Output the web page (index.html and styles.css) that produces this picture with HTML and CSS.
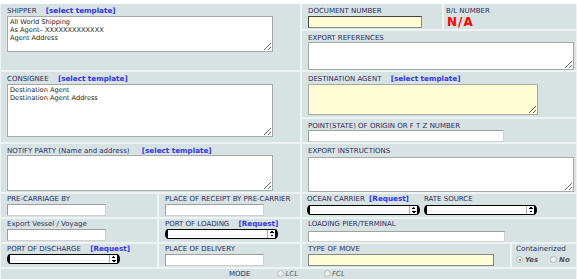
FILE: index.html
```html
<!DOCTYPE html>
<html lang="en">
<head>
    <meta charset="UTF-8">
    <title>Export Declaration</title>
    <link rel="stylesheet" href="styles.css">
</head>
<body>
    <div class="sheet">
        <!-- shipper / document -->
        <div class="band band-a">
            <div class="cell main">
                <div class="label">SHIPPER <a class="tpl">[select template]</a></div>
                <textarea class="box box-shipper">All World Shipping
As Agent– XXXXXXXXXXXXX
Agent Address</textarea>
            </div>
            <div class="side">
                <div class="pair pair-doc">
                    <div class="cell doc">
                        <div class="label">DOCUMENT NUMBER</div>
                        <input type="text" class="field yellow doc-field">
                    </div>
                    <div class="cell bl">
                        <div class="label">B/L NUMBER</div>
                        <div class="na">N/A</div>
                    </div>
                </div>
                <div class="cell grow">
                    <div class="label">EXPORT REFERENCES</div>
                    <textarea class="box box-ref"></textarea>
                </div>
            </div>
        </div>

        <!-- consignee / destination agent -->
        <div class="band band-b">
            <div class="cell main">
                <div class="label">CONSIGNEE <a class="tpl">[select template]</a></div>
                <textarea class="box box-consignee">Destination Agent
Destination Agent Address</textarea>
            </div>
            <div class="side">
                <div class="cell dest">
                    <div class="label">DESTINATION AGENT <a class="tpl">[select template]</a></div>
                    <textarea class="box yellow box-dest"></textarea>
                </div>
                <div class="cell grow">
                    <div class="label">POINT(STATE) OF ORIGIN OR F T Z NUMBER</div>
                    <input type="text" class="field point-field">
                </div>
            </div>
        </div>

        <!-- notify / instructions -->
        <div class="band band-c">
            <div class="cell main">
                <div class="label">NOTIFY PARTY (Name and address) <a class="tpl tpl-wide">[select template]</a></div>
                <textarea class="box box-notify"></textarea>
            </div>
            <div class="cell side">
                <div class="label">EXPORT INSTRUCTIONS</div>
                <textarea class="box box-instr"></textarea>
            </div>
        </div>

        <!-- transport rows -->
        <div class="band row">
            <div class="pair main">
                <div class="cell half">
                    <div class="label">PRE-CARRIAGE BY</div>
                    <input type="text" class="field short">
                </div>
                <div class="cell rest">
                    <div class="label">PLACE OF RECEIPT BY PRE-CARRIER</div>
                    <input type="text" class="field short">
                </div>
            </div>
            <div class="cell side carrier">
                <div class="pick-col">
                    <div class="label">OCEAN CARRIER <a class="tpl tpl-tight">[Request]</a></div>
                    <span class="pick"><span class="pick-arrows"></span></span>
                </div>
                <div class="pick-col">
                    <div class="label">RATE SOURCE</div>
                    <span class="pick"><span class="pick-arrows"></span></span>
                </div>
            </div>
        </div>

        <div class="band row">
            <div class="pair main">
                <div class="cell half">
                    <div class="label">Export Vessel / Voyage</div>
                    <input type="text" class="field short">
                </div>
                <div class="cell rest">
                    <div class="label">PORT OF LOADING <a class="tpl">[Request]</a></div>
                    <span class="pick pick-low"><span class="pick-arrows"></span></span>
                </div>
            </div>
            <div class="cell side">
                <div class="label">LOADING PIER/TERMINAL</div>
                <input type="text" class="field pier-field">
            </div>
        </div>

        <div class="band row row-f">
            <div class="pair main">
                <div class="cell half">
                    <div class="label">PORT OF DISCHARGE <a class="tpl">[Request]</a></div>
                    <span class="pick pick-low"><span class="pick-arrows"></span></span>
                </div>
                <div class="cell rest">
                    <div class="label">PLACE OF DELIVERY</div>
                    <input type="text" class="field short">
                </div>
            </div>
            <div class="pair side">
                <div class="cell move">
                    <div class="label">TYPE OF MOVE</div>
                    <input type="text" class="field yellow move-field">
                </div>
                <div class="cell boxed">
                    <div class="label label-plain">Containerized</div>
                    <div class="choices">
                        <span class="radio on"></span><i>Yes</i>
                        <span class="radio"></span><i>No</i>
                    </div>
                </div>
            </div>
        </div>

        <div class="cell mode">
            <span class="label">MODE</span>
            <span class="radio"></span><i>LCL</i>
            <span class="radio"></span><i>FCL</i>
        </div>
    </div>
</body>
</html>
```

FILE: styles.css
```css
:root {
    --cell-bg: #d7e3e3;
    --line-color: #eef4f4;
    --label-color: #2c2c62;
    --link-color: #3535f0;
    --yellow: #fffdd6;
}

body {
    margin: 0;
    background: #fff;
    font-family: 'DejaVu Sans', Verdana, sans-serif;
    color: var(--label-color);
}

.sheet {
    display: flex;
    flex-direction: column;
    gap: 2px;
    margin-top: 4px;
    padding: 0 1px;
    background: var(--line-color);
    height: 275px;
    overflow: hidden;
}

.band {
    display: flex;
    gap: 2px;
}

.band-a { height: 66px; }
.band-b { height: 71px; }
.band-c { height: 48px; }
.row { height: 23px; }
.row-f { height: 24px; }

.main {
    width: 299px;
    flex: none;
}

.side {
    width: 274px;
    flex: none;
    display: flex;
    flex-direction: column;
    gap: 2px;
}

.pair {
    display: flex;
    gap: 2px;
}

.side.pair {
    flex-direction: row;
}

.cell {
    background: var(--cell-bg);
    padding: 3px 6px 0;
    box-sizing: border-box;
}

.row .cell {
    padding-top: 1px;
}

.grow {
    flex: 1;
}

.pair-doc {
    height: 25px;
}

.doc { width: 140px; }
.bl { flex: 1; padding-left: 2px; }
.dest { height: 45px; }
.half { width: 156px; }
.rest { flex: 1; }
.move { width: 208px; }
.boxed { flex: 1; padding-left: 4px; }

.label {
    font-size: 7px;
    line-height: 8px;
    height: 8px;
    white-space: nowrap;
    margin-bottom: 1px;
}

.label-plain {
    font-size: 7.2px;
}

.tpl {
    font-size: 7.2px;
    font-weight: bold;
    color: var(--link-color);
    margin-left: 7px;
    cursor: pointer;
}

.tpl-wide { margin-left: 10px; }
.tpl-tight { margin-left: 2px; }

.na {
    color: #f00;
    font-weight: bold;
    font-size: 12px;
    line-height: 12px;
    letter-spacing: 1px;
    padding-left: 1px;
}

.box {
    display: block;
    box-sizing: border-box;
    border: 1px solid #a8a8a8;
    background: #fff;
    font-family: 'DejaVu Sans', Verdana, sans-serif;
    font-size: 6.6px;
    line-height: 8px;
    color: #1a1a1a;
    padding: 1px 2px;
    margin: 0;
    width: 266px;
    resize: both;
}

.box-shipper { height: 36px; margin-top: 1px; }
.box-ref { height: 28px; margin-top: -1px; }
.box-consignee { height: 53px; }
.box-dest { width: 230px; height: 31px; }
.box-notify { height: 36px; margin-top: -1px; }
.box-instr { height: 36px; margin-top: -1px; }

.yellow {
    background: var(--yellow);
}

.field {
    display: block;
    box-sizing: border-box;
    height: 12px;
    margin: 0;
    padding: 0 2px;
    border: 1px solid;
    border-color: #a0a0a0 #d0d0d0 #d0d0d0 #a0a0a0;
    background-color: #fff;
    font-size: 7px;
}

.field.yellow {
    background: var(--yellow);
}

.doc-field {
    width: 114px;
    border-color: #444 #888 #888 #444;
}

.point-field { width: 196px; margin-top: -1px; }
.short { width: 99px; }
.pier-field { width: 197px; }
.move-field { width: 186px; border-color: #888; }

.carrier {
    flex-direction: row;
    gap: 4px;
    padding-left: 5px;
}

.pick-col {
    display: flex;
    flex-direction: column;
}

.pick-col .label {
    margin-bottom: 2px;
}

.pick {
    display: block;
    position: relative;
    width: 113px;
    height: 10px;
    box-sizing: border-box;
    border: 1px solid #000;
    border-left-width: 3px;
    border-right-width: 3px;
    border-radius: 3px / 5px;
    background: linear-gradient(#fff 60%, #e4e4e4 62%, #fff 75%);
}

.pick-low {
    margin-top: 1px;
}

.pick-arrows {
    position: absolute;
    top: 0;
    right: 0;
    bottom: 0;
    width: 7px;
    border-left: 1px solid #b0b0b0;
    background:
        linear-gradient(to bottom right, transparent 50%, #000 50%) no-repeat 2px 1px / 2px 2px,
        linear-gradient(to bottom left, transparent 50%, #000 50%) no-repeat 4px 1px / 2px 2px,
        linear-gradient(to top right, transparent 50%, #000 50%) no-repeat 2px 5px / 2px 2px,
        linear-gradient(to top left, transparent 50%, #000 50%) no-repeat 4px 5px / 2px 2px;
}

.choices {
    display: flex;
    align-items: center;
    margin-top: 3px;
    font-size: 7px;
}

.choices i {
    margin: 0 12px 0 2px;
    color: #555;
    font-weight: bold;
}

.choices i:last-child {
    margin-right: 0;
}

.radio {
    display: inline-block;
    width: 7px;
    height: 7px;
    box-sizing: border-box;
    border-radius: 50%;
    border: 1px solid #b8b8b8;
    background: #eef0f0;
    position: relative;
}

.radio.on::after {
    content: '';
    position: absolute;
    left: 1.5px;
    top: 1.5px;
    width: 2px;
    height: 2px;
    border-radius: 50%;
    background: #777;
}

.mode {
    flex: 1;
    display: flex;
    align-items: flex-start;
    padding: 1px 0 0 228px;
    font-size: 7px;
}

.mode .label {
    margin-right: 27px;
}

.mode i {
    color: #555;
    margin: 0 26px 0 1px;
    line-height: 8px;
}
```
